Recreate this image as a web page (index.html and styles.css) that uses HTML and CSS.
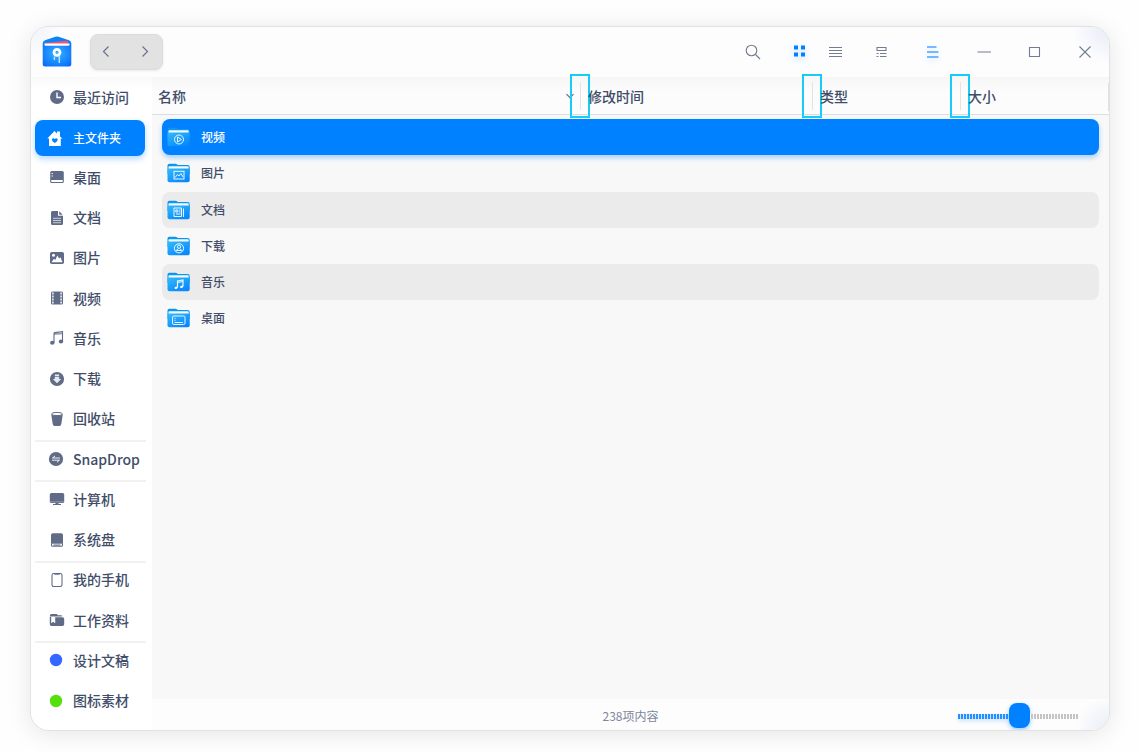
FILE: index.html
```html
<!DOCTYPE html>
<html lang="zh-CN">
<head>
<meta charset="utf-8">
<title>文件管理器</title>
<link rel="stylesheet" href="styles.css">
</head>
<body>
<svg class="defs" width="0" height="0" aria-hidden="true">
  <defs>
    <linearGradient id="folder-front" x1="0" y1="0" x2="0.7" y2="1"><stop offset="0" stop-color="#35baf8"/><stop offset="1" stop-color="#0788ff"/></linearGradient>
    <radialGradient id="logo-front" cx=".5" cy=".45" r=".7"><stop offset="0" stop-color="#35b4ff"/><stop offset="1" stop-color="#0868fa"/></radialGradient>
    <symbol id="folder" viewBox="0 0 23 20">
      <path d="M.5 2.5Q.5.7 2.3.7h6.2q1 0 1.700.8l.6.6h10q1.900 0 1.900 1.900v7H.5z" fill="#0b96ef"/>
      <rect x="1.500" y="3.300" width="20.200" height="4" rx=".8" fill="#f4fcff"/>
      <path d="M.5 5.500h22.200v11.700q0 2-2 2H2.500q-2 0-2-2z" fill="url(#folder-front)"/>
    </symbol>
  </defs>
</svg>
<div class="window">
  <header class="titlebar">
    <svg class="logo" width="30" height="32" viewBox="0 0 30 32">
      <path d="M1 6.500Q1 5 3 4.200L13.400.8q1.600-.5 3.200 0L27 4.200q2 .8 2 2.300V12H1z" fill="#0a83f5"/>
      <path d="M3 7 24.300 4.800q1.500 0 1.900 1.500l.3 3H3z" fill="#fb5272"/>
      <path d="M2.500 7.500h25v3h-25z" fill="#fff"/>
      <path d="M.7 6.500q.8 3.300 3 3.300h22.600q2.200 0 3-3.300V28q0 2.500-2.500 2.500H3.200Q.7 30.500.7 28z" fill="url(#logo-front)"/>
      <circle cx="15" cy="16.300" r="3" fill="none" stroke="#fff" stroke-width="2.800"/>
      <path d="M12.400 20.500V24M17.300 20v7" stroke="#bce4ff" stroke-width="1.400"/>
    </svg>
    <div class="history">
      <svg width="12" height="14" viewBox="0 0 12 14"><path d="M8.500 2 3.500 7l5 5"/></svg>
      <svg width="12" height="14" viewBox="0 0 12 14"><path d="m3.500 2 5 5-5 5"/></svg>
    </div>
    <div class="tools">
      <svg class="tool" viewBox="0 0 20 20"><circle cx="8.500" cy="8.500" r="5.300"/><path d="m12.500 12.500 4.500 4.500"/></svg>
      <svg class="tool tool-grid" viewBox="0 0 20 20"><path d="M4 2.500h4v4H4zM11 2.500h4v4h-4zM4 9.500h4v4H4zM11 9.500h4v4h-4z"/></svg>
      <svg class="tool tool-list" viewBox="0 0 20 20"><path d="M3 4.500h13M3 7.500h13M3 10.500h13M3 13.500h13"/></svg>
      <svg class="tool tool-group" viewBox="0 0 20 20"><path d="M5 4.500h9v3H5zM4.500 10.500h2M8 10.500h6.500M4.500 13.500h2M8 13.500h6.500"/></svg>
      <svg class="tool tool-menu" viewBox="0 0 20 20"><path d="M4 5h9.500M4 10h11.500M4 15h11.500"/></svg>
      <svg class="tool tool-min" viewBox="0 0 20 20"><path d="M3.500 10h13.500"/></svg>
      <svg class="tool tool-max" viewBox="0 0 20 20"><path d="M4.500 5.500h10v9h-10z"/></svg>
      <svg class="tool tool-close" viewBox="0 0 20 20"><path d="m4.500 4.500 11 11m0-11-11 11"/></svg>
    </div>
  </header>
  <div class="body">
    <nav class="sidebar">
      <a class="place"><svg class="icon" viewBox="0 0 16 16"><circle cx="8" cy="8" r="7"/><path class="cut" d="M8 3.500v5h4"/></svg>最近访问</a>
      <a class="place active"><svg class="icon" viewBox="0 0 16 16"><path d="M.3 8.500 7.500 1 10 3.500V1.500h3v5l2.500 2h-1.700V16H2V8.500z"/><path d="M5 9q1.300-1.600 2.800 0 1.500-1.600 2.800 0 .5 2-2.800 4Q4.500 11 5 9z" fill="#0081ff"/></svg>主文件夹</a>
      <a class="place"><svg class="icon" viewBox="0 0 16 16"><path d="M2.800 2h10.400q1.600 0 1.600 1.600V11H1.200V3.600Q1.200 2 2.800 2z"/><path class="cut thin" d="M2.500 4.500h1.500M2.500 7h1.500"/><path class="line" d="M1.700 11v1.500q0 1 1 1h10.600q1 0 1-1V11"/></svg>桌面</a>
      <a class="place"><svg class="icon" viewBox="0 0 16 16"><path d="M3.500 1H9v4.800h5v7.700q0 1.500-1.500 1.500h-9Q2 15 2 13.500v-11Q2 1 3.500 1zM10.200 1.200 13.700 4.700h-3.500z"/><path class="cut thin" d="M4 8.300h8M4 10.500h8M4 12.700h8" opacity=".75"/></svg>文档</a>
      <a class="place"><svg class="icon" viewBox="0 0 16 16"><rect x="1" y="2" width="14" height="12" rx="1.800"/><path d="M2.500 12.200 5 8.700l1.300 1.200 2-4.400 1.800 3 1.300-1.200 2.100 4.900z" fill="#fff"/><circle cx="4.500" cy="5.300" r="1.500" fill="#fff"/></svg>图片</a>
      <a class="place"><svg class="icon" viewBox="0 0 16 16"><rect x="2" y="1.500" width="12" height="13" rx="1.500"/><path class="cut" d="M3.900 2.500v11.500M12.100 2.500v11.500" stroke-dasharray="2 1"/></svg>视频</a>
      <a class="place"><svg class="icon" viewBox="0 0 16 16"><path class="line" d="M5 12.500v-9q0-.7.7-.9l7.800-1v9.900"/><path d="M5 3h8.500v1.200L5 5z" opacity=".65"/><ellipse cx="3.300" cy="12.800" rx="2.200" ry="2"/><ellipse cx="12" cy="11.500" rx="2.200" ry="2"/></svg>音乐</a>
      <a class="place"><svg class="icon" viewBox="0 0 16 16"><circle cx="8" cy="8" r="7.100"/><path d="M5.800 3.500h4.400V8h2L8 12.300 3.800 8h2z" fill="#e8eaf0"/><path d="M5 5.500h6" stroke="#606c87" stroke-width=".7"/></svg>下载</a>
      <a class="place"><svg class="icon" viewBox="0 0 16 16"><path d="M2.200 3.200h11.600L12.300 13q-.3 2-2 2H5.700q-1.700 0-2-2z"/><ellipse cx="8" cy="3" rx="5.400" ry="1.600" fill="#fff" stroke="#606c87"/></svg>回收站</a>
      <a class="place split"><svg class="icon shifted" viewBox="0 0 16 16"><circle cx="8" cy="8" r="7.100"/><path class="cut thin" d="M12 7H4.500L7 5M4 9.200h7.500L9 11.200"/></svg>SnapDrop</a>
      <a class="place split"><svg class="icon" viewBox="0 0 16 16"><rect x=".8" y="2" width="14.400" height="10" rx="1.500"/><path d="M1 10.800h14" stroke="#aab1c1" stroke-width=".6"/><path d="M6.500 12h3v1H12v1H4v-1h2.500z"/></svg>计算机</a>
      <a class="place"><svg class="icon" viewBox="0 0 16 16"><path d="M3.800 1.300h8.400q1.800 0 1.800 1.800v8.700H2V3.100q0-1.800 1.800-1.800z"/><path class="line" d="M2.500 11.500v1.800q0 1 1 1h9q1 0 1-1v-1.800M4.500 13h7"/></svg>系统盘</a>
      <a class="place split"><svg class="icon" viewBox="0 0 16 16"><rect class="line" x="3" y="1.500" width="10" height="13" rx="1.700"/><path d="M5.300 1.500h5.400v1.300H5.300z"/></svg>我的手机</a>
      <a class="place"><svg class="icon" viewBox="0 0 16 16"><path d="M.8 4Q.8 2 2.600 2h5l1.500 1.300h3.700V4.500H.8z"/><path d="M.8 5h1.400v6.300l2-1.500 2 1.500V5.300h7.300q1.700 0 1.700 1.700v5.300q0 1.700-1.700 1.700H2.500q-1.700 0-1.700-1.700z"/></svg>工作资料</a>
      <a class="place split"><svg class="icon shifted" viewBox="0 0 16 16"><circle cx="8" cy="8" r="6.200" fill="#3467ff"/></svg>设计文稿</a>
      <a class="place"><svg class="icon shifted" viewBox="0 0 16 16"><circle cx="8" cy="8" r="6.200" fill="#55df0b"/></svg>图标素材</a>
    </nav>
    <main class="content">
      <div class="columns">
        <div class="column">名称<svg class="sort" viewBox="0 0 10 10"><path d="m1.500 3.200 3.500 3.500 3.500-3.500"/></svg><i class="grip"></i></div>
        <div class="column">修改时间<i class="grip"></i></div>
        <div class="column">类型<i class="grip"></i></div>
        <div class="column">大小</div>
      </div>
      <div class="files">
        <div class="file selected"><svg class="folder" viewBox="0 0 23 20"><use href="#folder"/><circle cx="12" cy="12.500" r="4.500"/><path d="m10.500 10 4 2.500-4 2.500z"/></svg>视频</div>
        <div class="file"><svg class="folder" viewBox="0 0 23 20"><use href="#folder"/><rect x="7" y="8.300" width="10" height="7.700"/><path d="m8 14.500 2.500-3 1.500 1.500 2-2.500 2 3.500"/></svg>图片</div>
        <div class="file"><svg class="folder" viewBox="0 0 23 20"><use href="#folder"/><path d="M7 8h7.500v8.500H7zM16.500 8.500V17M8.800 10h2v2h-2zM12 10h1.500M12 12h1.500M9 14h4.500"/></svg>文档</div>
        <div class="file"><svg class="folder" viewBox="0 0 23 20"><use href="#folder"/><circle cx="12" cy="12.300" r="4.600"/><circle cx="12" cy="10.800" r="1.600"/><path d="m8.500 15 2.500-2M15.500 15 13 13M9.500 14.500h5"/></svg>下载</div>
        <div class="file"><svg class="folder" viewBox="0 0 23 20"><use href="#folder"/><path d="M10.500 15.500V9l5.500-1v6.500M10.500 10.500l5.500-1" stroke-width="1.200"/><path class="solid" d="M10.500 14.500v1q0 1.500-1.800 1.500-1.200 0-1.200-1t1.500-1.300zM16 13.500v1q0 1.500-1.800 1.500-1.200 0-1.200-1t1.500-1.300z"/></svg>音乐</div>
        <div class="file"><svg class="folder" viewBox="0 0 23 20"><use href="#folder"/><rect x="5.500" y="8" width="12.500" height="8.500" rx="1.300"/><path d="M7.500 10.300h1M7.500 12.300h1M7.500 14.500h8.500" /></svg>桌面</div>
      </div>
      <footer class="status">
        <span class="count">238项内容</span>
        <div class="slider"><div class="ticks filled"></div><div class="thumb"></div><div class="ticks rest"></div></div>
      </footer>
    </main>
  </div>
</div>
</body>
</html>
```

FILE: styles.css
```css
* { box-sizing: border-box; }

body {
  margin: 0;
  width: 1140px;
  height: 752px;
  overflow: hidden;
  padding: 26px 30px 21px;
  background: #fefefe;
  color: #414d68;
  font: 500 14px/20px "Noto Sans CJK SC", sans-serif;
}

svg { display: block; flex: none; }
.defs { position: absolute; }

.window {
  width: 1080px;
  height: 705px;
  display: flex;
  flex-direction: column;
  overflow: hidden;
  border: 1px solid #e2e2e3;
  border-radius: 19px;
  background: #f8f8f8;
  box-shadow: 0 3px 24px rgba(0, 0, 0, .1);
}

.titlebar {
  height: 50px;
  flex: none;
  display: flex;
  align-items: flex-start;
  padding: 8px 14px 0 11px;
  background:
    radial-gradient(circle at 0 0, #f0f3fa, #f0f3fa00 32px),
    radial-gradient(circle at 100% 0, #e6ebf6, #e9edf700 36px),
    #fdfdfe;
}

.logo { margin-top: 1px; }

.history {
  width: 73px;
  height: 36px;
  margin: -1px 0 0 18px;
  padding: 0 11px 0 9px;
  display: flex;
  align-items: center;
  justify-content: space-between;
  border: 1px solid #dcdcdc;
  border-radius: 8px;
  background: #e2e2e2;
  box-shadow: 0 1px 3px rgba(0, 0, 0, .08);
}

.history path { fill: none; stroke: #69748c; stroke-width: 1.2; }
.history svg { transform: translateY(-.5px); }

.tools { display: flex; margin: 7px 0 0 auto; }

.tool {
  width: 20px;
  height: 20px;
  fill: none;
  stroke: #727c92;
  stroke-width: 1.1;
}

.tool-grid { margin-left: 27px; fill: #0081ff; stroke: none; filter: drop-shadow(0 3px 3px #0081ff44); }
.tool-list { margin-left: 16px; }
.tool-group { margin-left: 26px; }
.tool-list, .tool-group, .tool-grid { transform: translateY(1px); }
.tool-menu { margin-left: 31px; stroke: #4aa4ff; stroke-width: 1.6; filter: drop-shadow(0 3px 3px #0081ff33); }
.tool-min { margin-left: 31px; }
.tool-max { margin-left: 31px; }
.tool-close { margin-left: 30px; }

.body { flex: 1; display: flex; min-height: 0; }

.sidebar {
  width: 121px;
  flex: none;
  padding: 0 5px 0 4px;
  background: linear-gradient(#f9f9f9, #fff 12px);
}

.place {
  height: 40.25px;
  display: flex;
  align-items: center;
  padding: 0 0 1.2px 14px;
  gap: 8px;
  white-space: nowrap;
}

.place.split { background: linear-gradient(#f1f1f2, #f1f1f2) 0 1px / 111px 2px no-repeat; }

.place.active {
  width: 110px;
  height: 36px;
  margin: 2.8px 0 1.4px;
  padding: 0 0 0 12px;
  gap: 10px;
  border-radius: 8px;
  background: #0081ff;
  box-shadow: 0 3px 6px rgba(0, 129, 255, .3);
  color: #fff;
  font-size: 12px;
}

.icon { width: 16px; height: 16px; margin: 1px .5px 0 -.5px; fill: #606c87; }
.icon.shifted { margin: 1px 1.5px 0 -1.5px; }
.active .icon { margin: 0; fill: #fff; }
.icon .cut { fill: none; stroke: #fff; stroke-width: 1.4; }
.icon .thin { stroke-width: .9; }
.icon .line { fill: none; stroke: #606c87; stroke-width: 1.1; }

.content { flex: 1; display: flex; flex-direction: column; }

.columns {
  height: 38px;
  flex: none;
  display: grid;
  grid-template-columns: 430px 232px 148px 1fr;
  padding-left: 6px;
  border-bottom: 1px solid #dedee0;
  background:
    linear-gradient(#e0e0e1, #e0e0e1) 100% 6px / 1px 28px no-repeat,
    linear-gradient(#f6f6f6, #fcfcfc 15px);
}

.column { position: relative; display: flex; align-items: center; }

.sort {
  width: 10px;
  height: 10px;
  margin: 0 13px 0 auto;
  fill: none;
  stroke: #606c87;
  stroke-width: 1.2;
}

/* Resize area straddling a column border. */
.grip {
  position: absolute;
  top: -3px;
  right: -2px;
  width: 20px;
  height: 44px;
  border: 2px solid #17cdf7;
  background: linear-gradient(#e3e3e4, #e3e3e4) 8px 6px / 1px 28px no-repeat;
}

.files { flex: 1; padding: 4.2px 10px 0 9.5px; }

.file {
  height: 36.2px;
  display: flex;
  align-items: center;
  gap: 11px;
  padding-left: 5.5px;
  border-radius: 8px;
  font-size: 12px;
}

.file:nth-child(odd) { background: #ebebeb; }

.file.selected {
  background: #0081ff;
  color: #fff;
  box-shadow: 0 3px 5px rgba(0, 129, 255, .32);
}

.folder { width: 23px; height: 20px; fill: none; stroke: #e9faff; }
.folder use { stroke: none; }
.folder .solid { fill: #fff; stroke: none; }

.status {
  position: relative;
  height: 31px;
  flex: none;
  display: flex;
  align-items: center;
  justify-content: center;
  padding-top: 2px;
  background: radial-gradient(circle at 100% 100%, #e9edf7, #e9edf700 34px), #fdfdfd;
}

.count { color: #7c869c; font-size: 12px; font-weight: 400; }

.slider {
  position: absolute;
  right: 30px;
  top: 4px;
  width: 121px;
  height: 25px;
  display: flex;
  align-items: center;
}

.ticks { height: 5px; margin-top: 2px; }
.filled { width: 51px; background: repeating-linear-gradient(90deg, #268fff 0 2px, #cce5ff 2px 3px); box-shadow: 0 2px 4px #0081ff33; }
.rest { flex: 1; background: repeating-linear-gradient(90deg, #fdfdfd 0 1px, #c4c4c6 1px 3px); }
.thumb { width: 21px; height: 25px; border-radius: 8px; background: #0081ff; box-shadow: 0 2px 5px #0081ff66; }
```
